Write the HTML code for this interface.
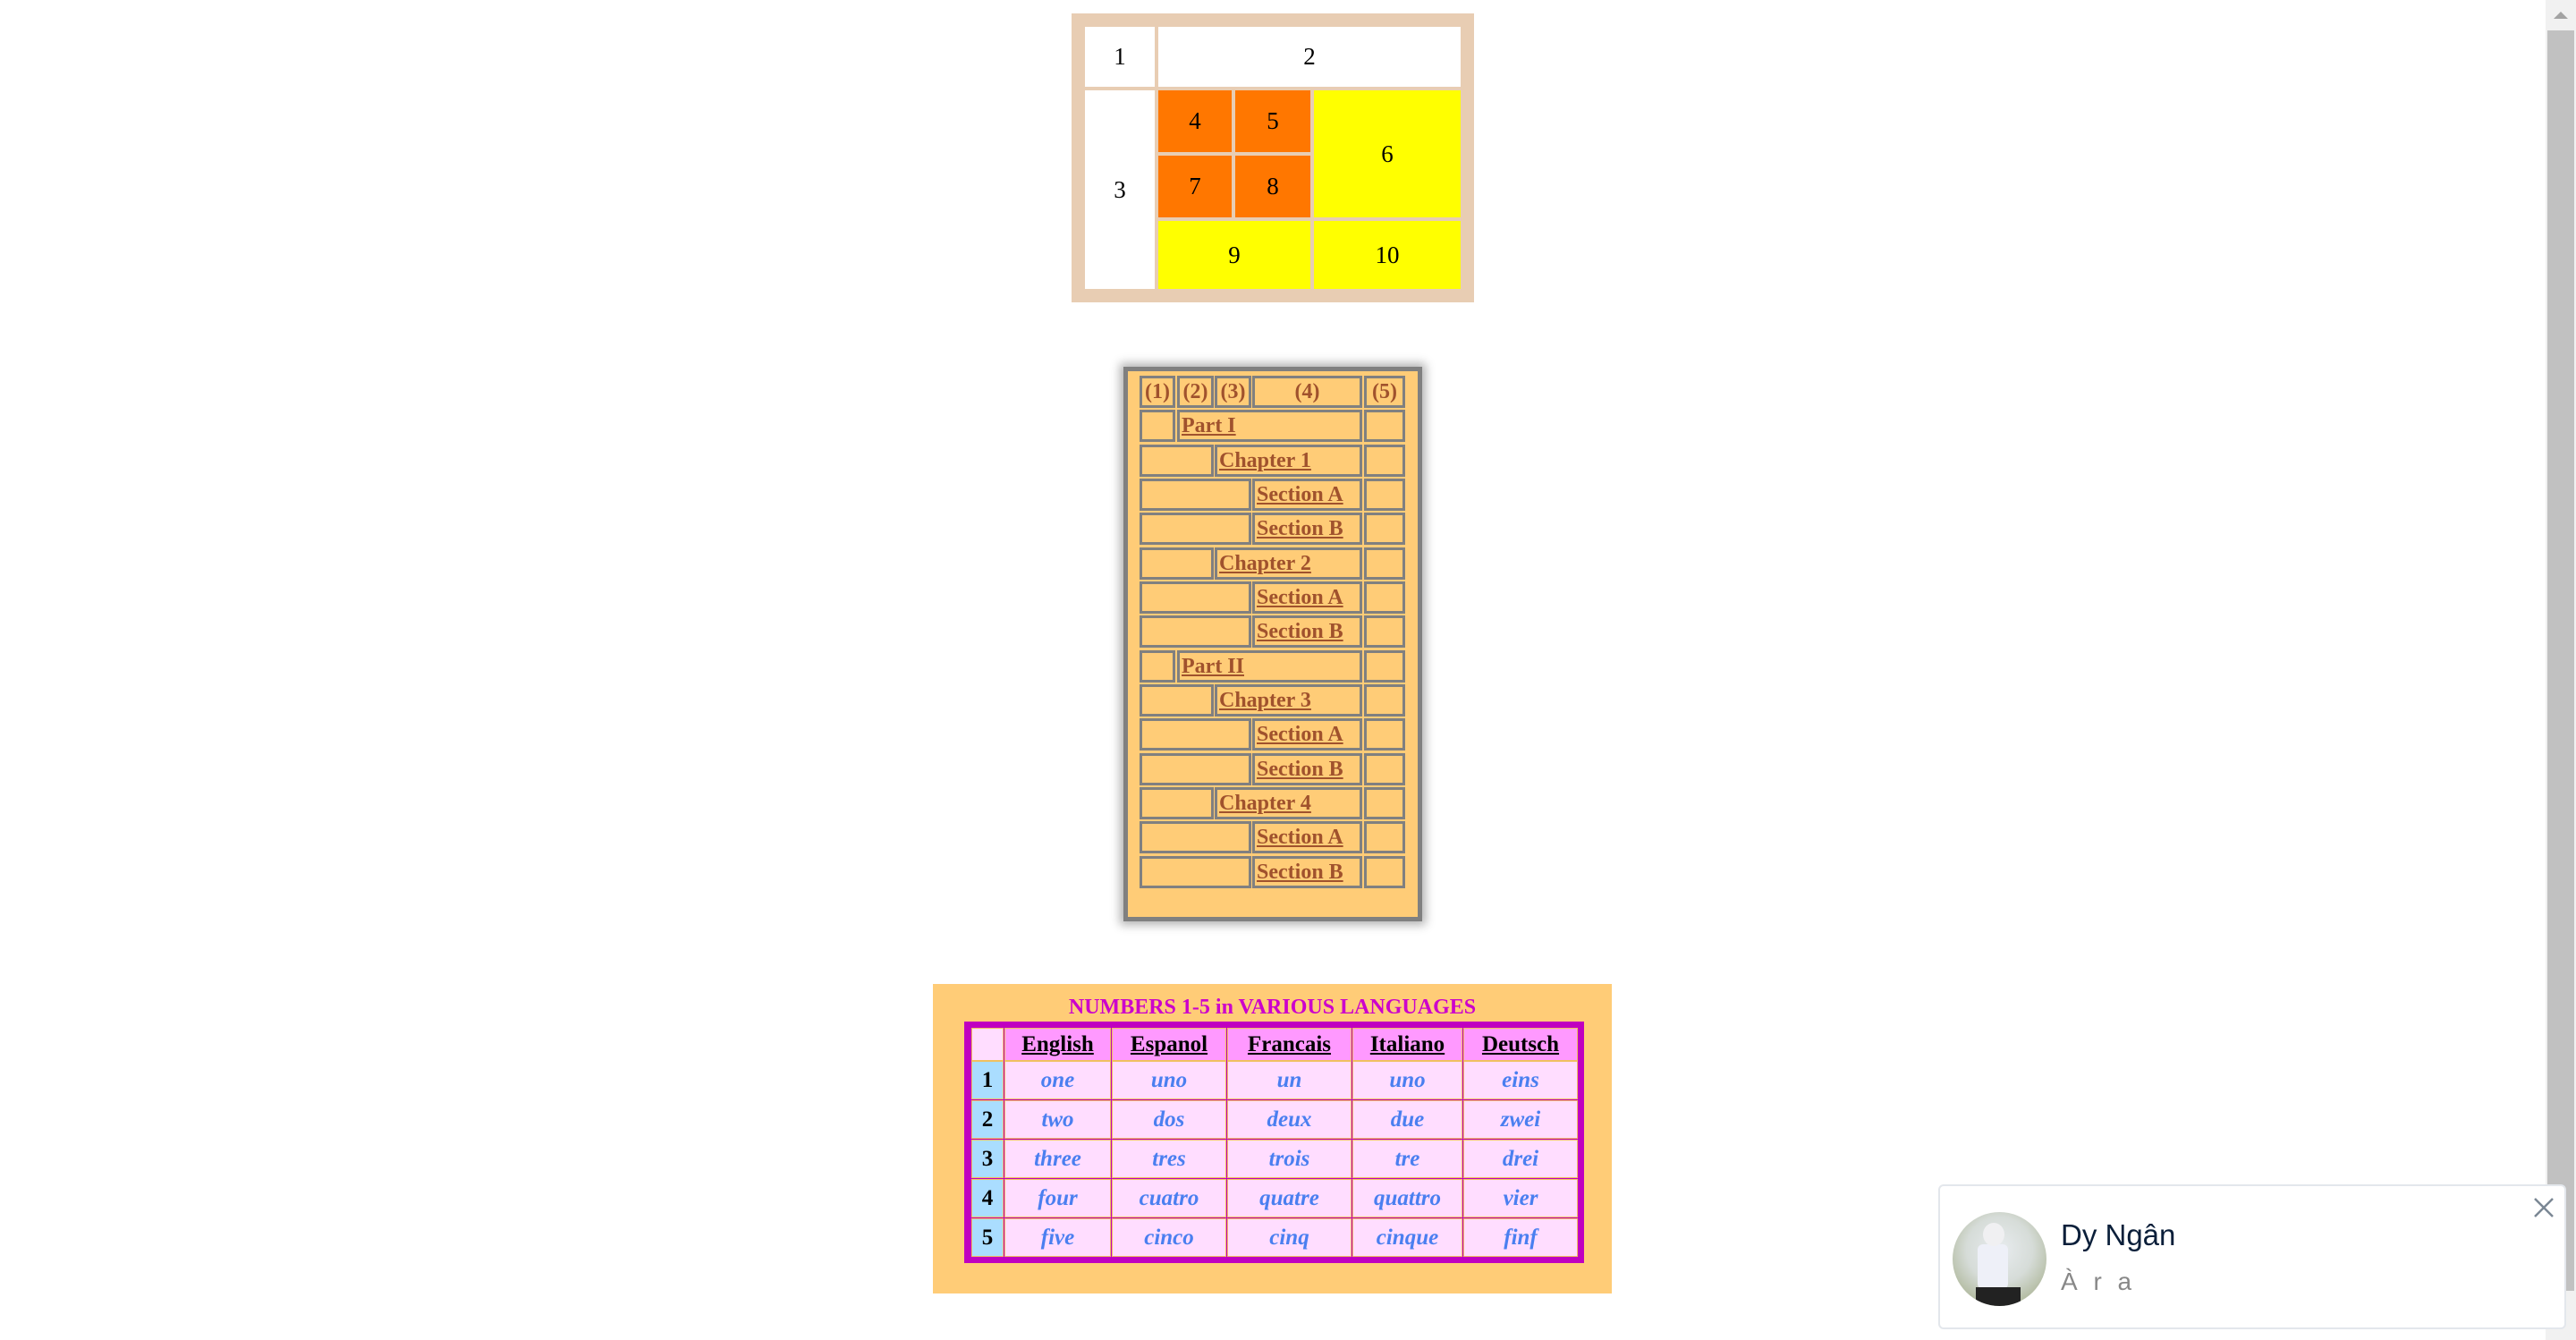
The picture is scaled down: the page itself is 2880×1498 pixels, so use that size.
<!DOCTYPE html>
<html><head><meta charset="utf-8"><style>
*{margin:0;padding:0;box-sizing:border-box}
html,body{width:2880px;height:1498px;overflow:hidden;background:#fff;position:relative}
.a{position:absolute}
.t1{font:27px "Liberation Serif",serif;color:#000;display:flex;align-items:center;justify-content:center}
.c2{position:absolute;border:3px solid #808080;font:bold 24px "Liberation Serif",serif;color:#a0522d;display:flex;align-items:center;height:36px}
.c2 u{text-decoration:underline;padding-left:2px}
.h{justify-content:center}
.c3{position:absolute;border:1px solid #f0c060;background:#ffddff;display:flex;align-items:center;justify-content:center;font:italic bold 25px "Liberation Serif",serif;color:#4a7ff0}
.hd{background:#ff99ff;color:#000;font:bold 25px "Liberation Serif",serif;text-decoration:underline}
.nm{background:#aaddff;color:#000;font:bold 25px "Liberation Serif",serif}
</style></head><body>

<!-- Table 1 -->
<div class="a" style="left:1198px;top:15px;width:450px;height:323px;background:#e8cdb3"></div>
<div class="a t1" style="left:1213px;top:30px;width:78px;height:67px;background:#fff">1</div>
<div class="a t1" style="left:1295px;top:30px;width:338px;height:67px;background:#fff">2</div>
<div class="a t1" style="left:1213px;top:101px;width:78px;height:222px;background:#fff">3</div>
<div class="a t1" style="left:1295px;top:101px;width:82px;height:69px;background:#ff7700">4</div>
<div class="a t1" style="left:1381px;top:101px;width:84px;height:69px;background:#ff7700">5</div>
<div class="a t1" style="left:1469px;top:101px;width:164px;height:142px;background:#ffff00">6</div>
<div class="a t1" style="left:1295px;top:174px;width:82px;height:69px;background:#ff7700">7</div>
<div class="a t1" style="left:1381px;top:174px;width:84px;height:69px;background:#ff7700">8</div>
<div class="a t1" style="left:1295px;top:247px;width:170px;height:76px;background:#ffff00">9</div>
<div class="a t1" style="left:1469px;top:247px;width:164px;height:76px;background:#ffff00">10</div>

<!-- Table 2 -->
<div class="a" style="left:1256px;top:410px;width:334px;height:620px;background:#ffcc77;border:5px solid #808080;box-shadow:0 0 10px 4px rgba(0,0,0,.3)"></div>
<div class="c2 h" style="left:1274px;top:420px;width:40px">(1)</div>
<div class="c2 h" style="left:1316px;top:420px;width:41px">(2)</div>
<div class="c2 h" style="left:1358px;top:420px;width:41px">(3)</div>
<div class="c2 h" style="left:1400px;top:420px;width:123px">(4)</div>
<div class="c2 h" style="left:1525px;top:420px;width:46px">(5)</div>

<div class="c2" style="left:1274px;top:458px;width:40px"></div><div class="c2" style="left:1316px;top:458px;width:207px"><u>Part I</u></div><div class="c2" style="left:1525px;top:458px;width:46px"></div>
<div class="c2" style="left:1274px;top:497px;width:83px"></div><div class="c2" style="left:1358px;top:497px;width:165px"><u>Chapter 1</u></div><div class="c2" style="left:1525px;top:497px;width:46px"></div>
<div class="c2" style="left:1274px;top:535px;width:125px"></div><div class="c2" style="left:1400px;top:535px;width:123px"><u>Section A</u></div><div class="c2" style="left:1525px;top:535px;width:46px"></div>
<div class="c2" style="left:1274px;top:573px;width:125px"></div><div class="c2" style="left:1400px;top:573px;width:123px"><u>Section B</u></div><div class="c2" style="left:1525px;top:573px;width:46px"></div>
<div class="c2" style="left:1274px;top:612px;width:83px"></div><div class="c2" style="left:1358px;top:612px;width:165px"><u>Chapter 2</u></div><div class="c2" style="left:1525px;top:612px;width:46px"></div>
<div class="c2" style="left:1274px;top:650px;width:125px"></div><div class="c2" style="left:1400px;top:650px;width:123px"><u>Section A</u></div><div class="c2" style="left:1525px;top:650px;width:46px"></div>
<div class="c2" style="left:1274px;top:688px;width:125px"></div><div class="c2" style="left:1400px;top:688px;width:123px"><u>Section B</u></div><div class="c2" style="left:1525px;top:688px;width:46px"></div>
<div class="c2" style="left:1274px;top:727px;width:40px"></div><div class="c2" style="left:1316px;top:727px;width:207px"><u>Part II</u></div><div class="c2" style="left:1525px;top:727px;width:46px"></div>
<div class="c2" style="left:1274px;top:765px;width:83px"></div><div class="c2" style="left:1358px;top:765px;width:165px"><u>Chapter 3</u></div><div class="c2" style="left:1525px;top:765px;width:46px"></div>
<div class="c2" style="left:1274px;top:803px;width:125px"></div><div class="c2" style="left:1400px;top:803px;width:123px"><u>Section A</u></div><div class="c2" style="left:1525px;top:803px;width:46px"></div>
<div class="c2" style="left:1274px;top:842px;width:125px"></div><div class="c2" style="left:1400px;top:842px;width:123px"><u>Section B</u></div><div class="c2" style="left:1525px;top:842px;width:46px"></div>
<div class="c2" style="left:1274px;top:880px;width:83px"></div><div class="c2" style="left:1358px;top:880px;width:165px"><u>Chapter 4</u></div><div class="c2" style="left:1525px;top:880px;width:46px"></div>
<div class="c2" style="left:1274px;top:918px;width:125px"></div><div class="c2" style="left:1400px;top:918px;width:123px"><u>Section A</u></div><div class="c2" style="left:1525px;top:918px;width:46px"></div>
<div class="c2" style="left:1274px;top:957px;width:125px"></div><div class="c2" style="left:1400px;top:957px;width:123px"><u>Section B</u></div><div class="c2" style="left:1525px;top:957px;width:46px"></div>

<!-- Table 3 -->
<div class="a" style="left:1043px;top:1100px;width:759px;height:346px;background:#ffcc77"></div>
<div class="a" style="left:1043px;top:1113px;width:759px;text-align:center;font:bold 24px 'Liberation Serif',serif;color:#cc00cc">NUMBERS 1-5 in VARIOUS LANGUAGES</div>
<div class="a" style="left:1078px;top:1142px;width:693px;height:270px;background:#c000c0"></div>
<div class="c3" style="left:1086px;top:1149px;width:36px;height:37px"></div>
<div class="c3 hd" style="left:1123px;top:1149px;width:119px;height:37px">English</div>
<div class="c3 hd" style="left:1243px;top:1149px;width:128px;height:37px">Espanol</div>
<div class="c3 hd" style="left:1372px;top:1149px;width:139px;height:37px">Francais</div>
<div class="c3 hd" style="left:1512px;top:1149px;width:123px;height:37px">Italiano</div>
<div class="c3 hd" style="left:1636px;top:1149px;width:128px;height:37px">Deutsch</div>

<div class="c3 nm" style="left:1086px;top:1186px;width:36px;height:43px">1</div>
<div class="c3" style="left:1123px;top:1186px;width:119px;height:43px">one</div><div class="c3" style="left:1243px;top:1186px;width:128px;height:43px">uno</div><div class="c3" style="left:1372px;top:1186px;width:139px;height:43px">un</div><div class="c3" style="left:1512px;top:1186px;width:123px;height:43px">uno</div><div class="c3" style="left:1636px;top:1186px;width:128px;height:43px">eins</div>
<div class="c3 nm" style="left:1086px;top:1230px;width:36px;height:43px">2</div>
<div class="c3" style="left:1123px;top:1230px;width:119px;height:43px">two</div><div class="c3" style="left:1243px;top:1230px;width:128px;height:43px">dos</div><div class="c3" style="left:1372px;top:1230px;width:139px;height:43px">deux</div><div class="c3" style="left:1512px;top:1230px;width:123px;height:43px">due</div><div class="c3" style="left:1636px;top:1230px;width:128px;height:43px">zwei</div>
<div class="c3 nm" style="left:1086px;top:1274px;width:36px;height:43px">3</div>
<div class="c3" style="left:1123px;top:1274px;width:119px;height:43px">three</div><div class="c3" style="left:1243px;top:1274px;width:128px;height:43px">tres</div><div class="c3" style="left:1372px;top:1274px;width:139px;height:43px">trois</div><div class="c3" style="left:1512px;top:1274px;width:123px;height:43px">tre</div><div class="c3" style="left:1636px;top:1274px;width:128px;height:43px">drei</div>
<div class="c3 nm" style="left:1086px;top:1318px;width:36px;height:43px">4</div>
<div class="c3" style="left:1123px;top:1318px;width:119px;height:43px">four</div><div class="c3" style="left:1243px;top:1318px;width:128px;height:43px">cuatro</div><div class="c3" style="left:1372px;top:1318px;width:139px;height:43px">quatre</div><div class="c3" style="left:1512px;top:1318px;width:123px;height:43px">quattro</div><div class="c3" style="left:1636px;top:1318px;width:128px;height:43px">vier</div>
<div class="c3 nm" style="left:1086px;top:1362px;width:36px;height:43px">5</div>
<div class="c3" style="left:1123px;top:1362px;width:119px;height:43px">five</div><div class="c3" style="left:1243px;top:1362px;width:128px;height:43px">cinco</div><div class="c3" style="left:1372px;top:1362px;width:139px;height:43px">cinq</div><div class="c3" style="left:1512px;top:1362px;width:123px;height:43px">cinque</div><div class="c3" style="left:1636px;top:1362px;width:128px;height:43px">finf</div>

<!-- Scrollbar -->
<div class="a" style="left:2846px;top:0;width:34px;height:1498px;background:#f1f1f1"></div>
<div class="a" style="left:2855px;top:13px;width:0;height:0;border-left:8px solid transparent;border-right:8px solid transparent;border-bottom:8px solid #a3a3a3"></div>
<div class="a" style="left:2848px;top:34px;width:30px;height:1409px;background:#c1c1c1"></div>

<!-- Notification -->
<div class="a" style="left:2167px;top:1324px;width:702px;height:162px;background:#fff;border:2px solid #e3e7ec;border-radius:6px"></div>
<div class="a" style="left:2183px;top:1355px;width:105px;height:105px;border-radius:50%;background:radial-gradient(circle at 50% 40%,#e8ecef 0,#d6dcd8 45%,#aeb79a 80%,#8a9a70 100%);overflow:hidden">
  <div class="a" style="left:28px;top:36px;width:34px;height:50px;background:#eef0f8;border-radius:6px"></div>
  <div class="a" style="left:34px;top:12px;width:24px;height:26px;background:#f0f0f2;border-radius:50%"></div>
  <div class="a" style="left:26px;top:84px;width:50px;height:25px;background:#222"></div>
</div>
<div class="a" style="left:2304px;top:1362px;font:33px 'Liberation Sans','DejaVu Sans',sans-serif;color:#0b1f3a">Dy Ngân</div>
<div class="a" style="left:2304px;top:1417px;font:28px 'Liberation Sans',sans-serif;color:#888;letter-spacing:5px">À r a</div>
<svg class="a" style="left:2832px;top:1338px" width="24" height="24" viewBox="0 0 24 24"><path d="M2 2L22 22M22 2L2 22" stroke="#7a8794" stroke-width="2.5" fill="none"/></svg>
</body></html>
